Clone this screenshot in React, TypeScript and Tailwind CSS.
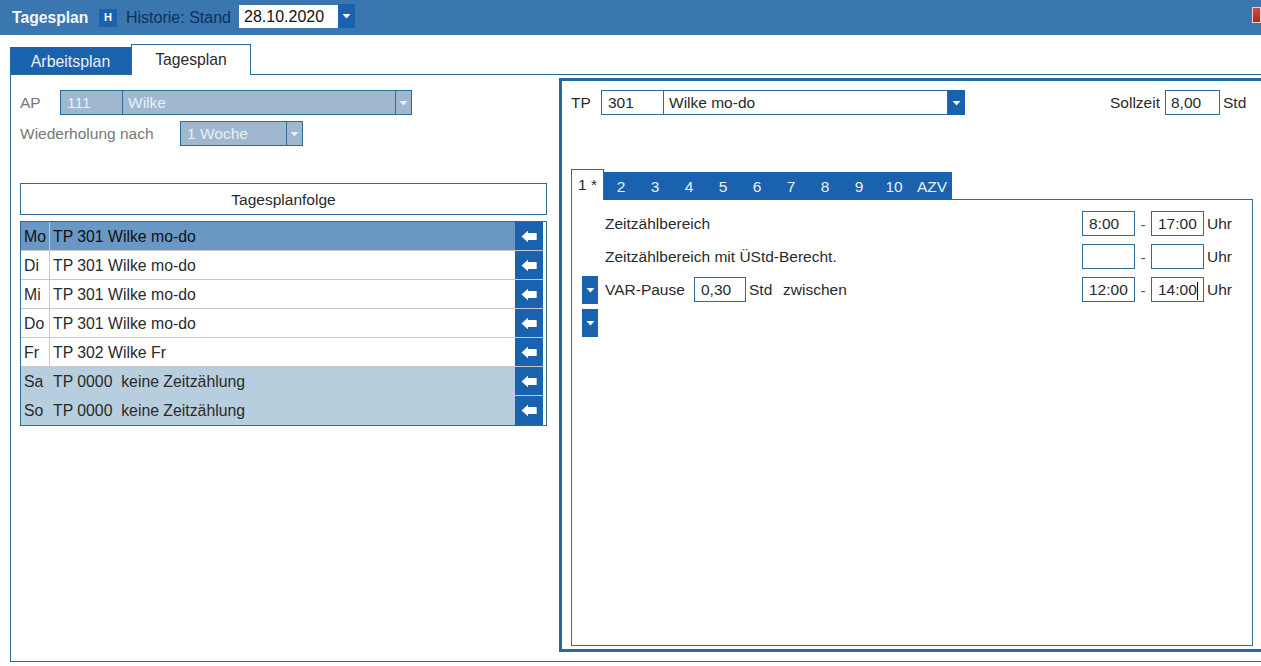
import React from "react";

const Caret = ({ className = "" }: { className?: string }) => (
  <svg width="9" height="6" viewBox="0 0 9 6" className={className}>
    <path d="M0.5 1H8.5L4.5 5.5Z" fill="currentColor" />
  </svg>
);

const ArrowLeft = () => (
  <svg width="16" height="13" viewBox="0 0 16 13">
    <path d="M0.5 6.5L7 0.7V3H15.2Q15.7 3 15.7 3.5V9.5Q15.7 10 15.2 10H7V12.3Z" fill="#fff" />
  </svg>
);

const DropBtn = ({ className }: { className: string }) => (
  <div className={`flex items-center justify-center bg-[#1a62ad] text-white ${className}`}>
    <Caret />
  </div>
);

const Box = ({ w, children = null, pad = "pl-[6px]" }: { w: string; children?: React.ReactNode; pad?: string }) => (
  <div className={`h-[25px] border border-[#2f6c94] bg-white leading-[23px] ${w} ${pad}`}>{children}</div>
);

const days = [
  ["Mo", "TP 301 Wilke mo-do", "sel"],
  ["Di", "TP 301 Wilke mo-do", ""],
  ["Mi", "TP 301 Wilke mo-do", ""],
  ["Do", "TP 301 Wilke mo-do", ""],
  ["Fr", "TP 302 Wilke Fr", ""],
  ["Sa", "TP 0000  keine Zeitzählung", "off"],
  ["So", "TP 0000  keine Zeitzählung", "off"],
];

const Times = ({ a = "", b = "", cursor = false }: { a?: string; b?: string; cursor?: boolean }) => (
  <div className="ml-auto flex items-center">
    <Box w="w-[53px]">{a}</Box>
    <span className="w-[16px] pt-[2px] text-center text-[#555]">-</span>
    <div className="relative">
      <Box w="w-[53px]">{b}</Box>
      {cursor && <div className="absolute left-[46px] top-[5px] h-[18px] w-px bg-[#111]" />}
    </div>
    <span className="ml-[3px] w-[45px]">Uhr</span>
  </div>
);

export default function App() {
  return (
    <div className="relative h-[666px] w-[1261px] overflow-hidden bg-white font-['Liberation_Sans',Arial,sans-serif] text-[15.5px] text-[#2a2a2a]">
      <header className="flex h-[35px] items-center bg-[#3a76b0] pl-[12px]">
        <span className="w-[77px] whitespace-nowrap text-[15.7px] font-bold text-[#f2f6fa]">Tagesplan</span>
        <div className="ml-[10px] flex h-[18px] w-[18px] items-center justify-center bg-[#1a62ad] text-[11px] font-bold text-white">H</div>
        <span className="ml-[9px] w-[104px] whitespace-nowrap text-[16px] text-[#10305e]">Historie: Stand</span>
        <div className="ml-[9px] mt-[4px] flex h-[24px] items-stretch self-start">
          <div className="mt-px h-[23px] w-[99px] bg-white pl-[5px] text-[16px] leading-[23px] text-[#111]">28.10.2020</div>
          <DropBtn className="w-[17px]" />
        </div>
        <div className="ml-auto mt-[7px] h-[16px] w-[9px] self-start border border-[#f0d0c8] bg-gradient-to-b from-[#d8483c] to-[#a82a20]" />
      </header>

      <div className="flex h-[39px] items-end pl-[10px]">
        <div className="h-[27px] w-[121px] bg-[#1a62ad] text-center text-[15.9px] leading-[29px] text-[#e8f0f8]">Arbeitsplan</div>
        <div className="relative z-10 -mb-px h-[31px] w-[120px] border border-b-0 border-[#2f6c94] bg-white text-center text-[15.7px] leading-[30px]">Tagesplan</div>
      </div>

      <div className="ml-[10px] flex h-[588px] border-b border-l border-t border-[#2f6c94]">
        <section className="w-[548px] shrink-0 pl-[9px]">
          <div className="mt-[15px] flex items-center text-[#777]">
            <span className="w-[40px]">AP</span>
            <div className="flex h-[25px] w-[352px] border border-[#2f6c94] bg-[#9fb8d0] leading-[23px] text-[#e8eff5]">
              <span className="w-[62px] border-r border-[#2f6c94] pl-[6px]">111</span>
              <span className="flex-1 pl-[5px]">Wilke</span>
              <div className="flex w-[16px] items-center justify-center border-l border-[#2f6c94] text-[#e8eff5]"><Caret /></div>
            </div>
          </div>
          <div className="mt-[6px] flex items-center text-[#777]">
            <span className="w-[160px] whitespace-nowrap">Wiederholung nach</span>
            <div className="flex h-[25px] w-[123px] border border-[#2f6c94] bg-[#9fb8d0] leading-[23px] text-[#e8eff5]">
              <span className="flex-1 pl-[6px]">1 Woche</span>
              <div className="flex w-[16px] items-center justify-center border-l border-[#2f6c94]"><Caret /></div>
            </div>
          </div>

          <div className="mt-[37px] h-[32px] w-[527px] border border-[#2f6c94] text-center leading-[31px]">Tagesplanfolge</div>

          <div className="mt-[6px] w-[527px] border border-[#2f6c94] pr-[3px]">
            {days.map(([d, t, k], i) => (
              <div
                key={d}
                className={`flex h-[29px] text-[15.8px] ${i < 6 ? "border-b" : ""} ${k === "off" ? "border-[#b7cede] bg-[#b7cede]" : "border-[#c8c8c8]"} ${k === "sel" ? "bg-[#6a98c4]" : ""}`}
              >
                <span className={`w-[29px] pl-[3px] leading-[29px] ${k === "off" ? "" : "border-r border-[#c8c8c8]"} ${k === "sel" ? "text-[#111]" : ""}`}>{d}</span>
                <span className={`flex-1 whitespace-pre pl-[3px] leading-[29px] ${k === "sel" ? "text-[#111]" : ""}`}>{t}</span>
                <div className="flex w-[28px] items-center justify-center bg-[#1a62ad]"><ArrowLeft /></div>
              </div>
            ))}
          </div>
        </section>

        <section className="mt-[3px] flex h-[574px] flex-1 flex-col border-b-[3px] border-l-[3px] border-t-[3px] border-[#24689f] pl-[9px]">
          <div className="mt-[9px] flex items-center">
            <span className="w-[30px]">TP</span>
            <div className="flex h-[25px] w-[347px] border border-[#2f6c94] leading-[23px]">
              <span className="w-[62px] border-r border-[#2f6c94] pl-[6px]">301</span>
              <span className="flex-1 pl-[5px]">Wilke mo-do</span>
            </div>
            <DropBtn className="h-[25px] w-[17px]" />
            <span className="ml-[145px] w-[55px]">Sollzeit</span>
            <Box w="w-[55px]" pad="pl-[5px]">8,00</Box>
            <span className="ml-[3px]">Std</span>
          </div>

          <div className="mt-[53px] flex h-[31px] items-end">
            <div className="relative z-10 -mb-px h-[31px] w-[33px] border border-b-0 border-[#2f6c94] bg-white text-center leading-[29px]">1 *</div>
            <div className="relative z-10 -mb-px flex h-[28px] bg-[#1a62ad] text-center leading-[29px] text-[#e8f0f8]">
              {["2", "3", "4", "5", "6", "7", "8", "9"].map((n) => (
                <span key={n} className="w-[34px]">{n}</span>
              ))}
              <span className="w-[36px]">10</span>
              <span className="w-[40px]">AZV</span>
            </div>
          </div>

          <div className="flex h-[447px] w-[682px] flex-col border border-[#2f6c94] pt-[11px]">
            <div className="flex h-[25px] items-center pl-[33px]">
              <span>Zeitzählbereich</span>
              <Times a="8:00" b="17:00" />
            </div>
            <div className="mt-[8px] flex h-[25px] items-center pl-[33px]">
              <span className="pt-px">Zeitzählbereich mit ÜStd-Berecht.</span>
              <Times />
            </div>
            <div className="mt-[8px] flex h-[25px] items-center pl-[10px]">
              <DropBtn className="h-[28px] w-[16px]" />
              <span className="ml-[7px] w-[89px] whitespace-nowrap">VAR-Pause</span>
              <Box w="w-[52px]">0,30</Box>
              <span className="ml-[3px] w-[34px]">Std</span>
              <span>zwischen</span>
              <Times a="12:00" b="14:00" cursor />
            </div>
            <div className="ml-[10px] mt-[7px]"><DropBtn className="h-[28px] w-[16px]" /></div>
          </div>
        </section>
      </div>
    </div>
  );
}
